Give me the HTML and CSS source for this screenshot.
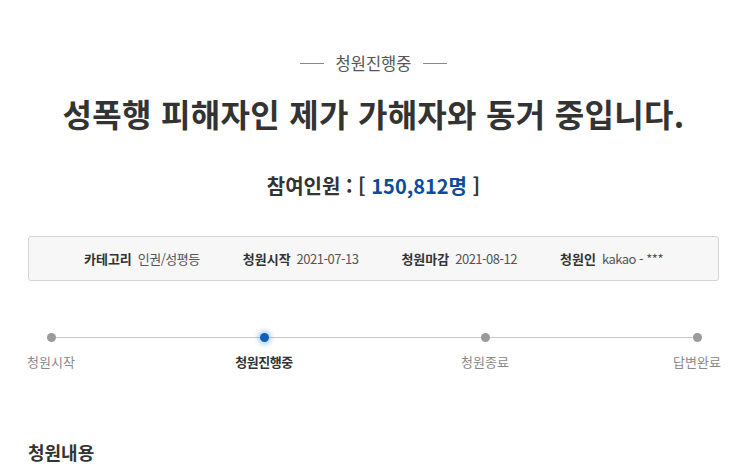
FILE: index.html
```html
<!DOCTYPE html>
<html lang="ko">
<head>
<meta charset="utf-8">
<title>청원진행중</title>
<link rel="stylesheet" href="styles.css">
</head>
<body>
<div class="page">
  <div class="status"><span class="status-line"></span><span class="status-text">청원진행중</span><span class="status-line"></span></div>
  <h1 class="title">성폭행 피해자인 제가 가해자와 동거 중입니다.</h1>
  <div class="count">참여인원 : [ <span class="count-num">150,812명</span> ]</div>
  <ul class="info">
    <li><strong>카테고리</strong><span>인권/성평등</span></li>
    <li><strong>청원시작</strong><span>2021-07-13</span></li>
    <li><strong>청원마감</strong><span>2021-08-12</span></li>
    <li><strong>청원인</strong><span>kakao - ***</span></li>
  </ul>
  <div class="steps">
    <div class="step-line"></div>
    <div class="step s1"><i class="dot"></i><span>청원시작</span></div>
    <div class="step s2 active"><i class="dot"></i><span>청원진행중</span></div>
    <div class="step s3"><i class="dot"></i><span>청원종료</span></div>
    <div class="step s4"><i class="dot"></i><span>답변완료</span></div>
  </div>
  <h2 class="section">청원내용</h2>
</div>
</body>
</html>
```

FILE: styles.css
```css
* { box-sizing: border-box; }
html, body { margin: 0; padding: 0; background: #fff; }
body {
  font-family: "Noto Sans CJK KR", "Noto Sans", sans-serif;
  color: #333;
}
.page {
  width: 691px;
  margin-left: 28px;
  padding-top: 52px;
}
.status {
  display: flex;
  justify-content: center;
  align-items: center;
  gap: 12px;
  height: 22px;
}
.status-line {
  width: 24px;
  height: 1px;
  background: #888;
}
.status-text {
  font-size: 16.5px;
  line-height: 22px;
  color: #555;
}
.title {
  margin: 19px 0 0;
  text-align: center;
  font-size: 32px;
  line-height: 40px;
  font-weight: 700;
  letter-spacing: 0.3px;
  color: #333;
}
.count {
  margin-top: 40px;
  text-align: center;
  font-size: 20px;
  line-height: 26px;
  font-weight: 700;
  color: #333;
}
.count-num { color: #0d4c98; }
.info {
  list-style: none;
  margin: 37px 0 0;
  padding: 0;
  height: 45px;
  display: flex;
  justify-content: center;
  align-items: center;
  gap: 43px;
  background: #f7f7f7;
  border: 1px solid #d4d4d4;
  border-radius: 3px;
  font-size: 13px;
}
.info li { display: flex; gap: 6px; line-height: 18px; }
.info strong { font-weight: 700; color: #333; }
.info span { color: #555; letter-spacing: -0.5px; }
.steps {
  position: relative;
  margin-top: 52px;
  display: flex;
  justify-content: space-between;
}
.step-line {
  position: absolute;
  left: 23px;
  right: 22px;
  top: 4px;
  height: 1px;
  background: #c9c9c9;
}
.step {
  position: relative;
  display: flex;
  flex-direction: column;
  align-items: center;
  gap: 11px;
  font-size: 13px;
  line-height: 18px;
  color: #888;
  white-space: nowrap;
}
.s1 { width: 46px; }
.s2, .s3 { width: 62px; }
.s4 { width: 44px; }
.dot {
  display: block;
  width: 9px;
  height: 9px;
  border-radius: 50%;
  background: #9b9b9b;
}
.active { color: #333; font-weight: 700; letter-spacing: -0.5px; }
.active .dot {
  background: #1160b8;
  box-shadow: 0 0 4px 3px rgba(70, 150, 235, 0.35);
}
.section {
  margin: 69px 0 0;
  font-size: 18px;
  line-height: 24px;
  font-weight: 700;
  color: #333;
}
```
